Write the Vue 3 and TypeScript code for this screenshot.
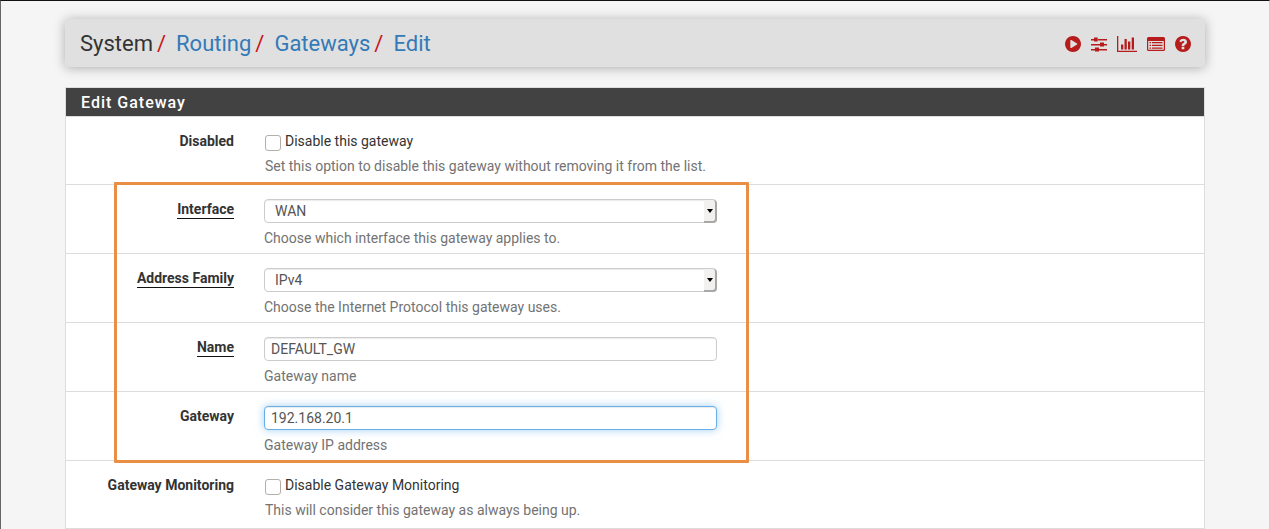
<script setup lang="ts">
import { ref } from 'vue'

const disabled = ref(false)
const iface = ref('WAN')
const family = ref('IPv4')
const gatewayName = ref('DEFAULT_GW')
const gatewayIp = ref('192.168.20.1')
const monitoringOff = ref(false)

const crumbs: string[] = ['Routing', 'Gateways', 'Edit']
</script>

<template>
  <div class="page">
    <div class="container">
      <header class="header">
        <nav class="crumbs" aria-label="Breadcrumb">
          <span>System</span>
          <template v-for="crumb in crumbs" :key="crumb">
            <span class="slash">/</span>
            <a href="#">{{ crumb }}</a>
          </template>
        </nav>
        <div class="actions">
          <a href="#" aria-label="Start service">
            <svg width="16" height="16" viewBox="128 128 1536 1536"><path d="M896 128q209 0 385.500 103t279.500 279.500 103 385.500-103 385.500-279.500 279.500-385.500 103-385.500-103-279.500-279.500-103-385.500 103-385.500 279.500-279.500 385.500-103zm384 823q32-18 32-55t-32-55l-544-320q-31-19-64-1-32 19-32 56v640q0 37 32 56 16 8 32 8 17 0 32-9z" /></svg>
          </a>
          <a href="#" aria-label="Related settings">
            <svg width="16" height="16" viewBox="0 0 16 16"><path d="M0 3h3v1.500H0zM7 3h9v1.500H7zM3 1.500h3.700v4H3zM0 8h9v1.500H0zM13 8h3v1.500h-3zM9 6.500h4v4H9zM0 13h4v1.500H0zM8 13h8v1.500H8zM4 11.500h4v4H4z" /></svg>
          </a>
          <a href="#" aria-label="Related status">
            <svg width="20" height="16" viewBox="0 0 20 16"><path d="M0 0h1.300v14.700H20V16H0zM4 8.500h2.300v5H4zM7.500 3h2.300v10.500H7.500zM11 5.500h2.300v8H11zM14.700 1.500H17v12h-2.300z" /></svg>
          </a>
          <a href="#" aria-label="Related log entries">
            <svg width="18" height="16" viewBox="0 0 18 16"><path fill-rule="evenodd" d="M1.500 1h15Q18 1 18 2.500v11q0 1.500-1.500 1.500h-15Q0 15 0 13.500v-11Q0 1 1.500 1zM1.200 5v8.300q0 .5.500.5h14.600q.5 0 .5-.5V5zM2.500 6H4v1.300H2.500zM5 6h10.500v1.300H5zM2.500 8.700H4V10H2.500zM5 8.700h10.500V10H5zM2.500 11.400H4v1.300H2.500zM5 11.400h10.500v1.300H5z" /></svg>
          </a>
          <a href="#" aria-label="Help">
            <svg width="16" height="16" viewBox="128 128 1536 1536"><path d="M1024 1376v-192q0-14-9-23t-23-9h-192q-14 0-23 9t-9 23v192q0 14 9 23t23 9h192q14 0 23-9t9-23zm256-672q0-88-55.500-163t-138.500-116-170-41q-243 0-371 213-15 24 8 42l132 100q7 6 19 6 16 0 25-12 53-68 86-92 34-24 86-24 48 0 85.500 26t37.500 59q0 38-20 61t-68 45q-63 28-115.500 86.500t-52.500 125.500v36q0 14 9 23t23 9h192q14 0 23-9t9-23q0-19 21.500-49.500t54.500-49.500q32-18 49-28.500t46-35 44.500-48 28-60.500 12.500-81zm384 192q0 209-103 385.500t-279.500 279.500-385.500 103-385.500-103-279.500-279.500-103-385.500 103-385.500 279.500-279.500 385.500-103 385.500 103 279.500 279.500 103 385.500z" /></svg>
          </a>
        </div>
      </header>

      <form class="panel" @submit.prevent>
        <h2 class="panel-title">Edit Gateway</h2>

        <div class="row check-row">
          <span class="label">Disabled</span>
          <div class="field">
            <label class="check"><input v-model="disabled" type="checkbox" />Disable this gateway</label>
            <p class="help indent">Set this option to disable this gateway without removing it from the list.</p>
          </div>
        </div>

        <div class="group">
          <div class="row">
            <label class="label" for="interface"><span class="required">Interface</span></label>
            <div class="field">
              <div class="select">
                <select id="interface" v-model="iface" class="control">
                  <option>WAN</option>
                  <option>LAN</option>
                </select>
                <span class="arrow"></span>
              </div>
              <p class="help">Choose which interface this gateway applies to.</p>
            </div>
          </div>
          <div class="row">
            <label class="label" for="family"><span class="required">Address Family</span></label>
            <div class="field">
              <div class="select">
                <select id="family" v-model="family" class="control">
                  <option>IPv4</option>
                  <option>IPv6</option>
                </select>
                <span class="arrow"></span>
              </div>
              <p class="help">Choose the Internet Protocol this gateway uses.</p>
            </div>
          </div>
          <div class="row">
            <label class="label" for="name"><span class="required">Name</span></label>
            <div class="field">
              <input id="name" v-model="gatewayName" class="control" type="text" />
              <p class="help">Gateway name</p>
            </div>
          </div>
          <div class="row">
            <label class="label" for="gateway">Gateway</label>
            <div class="field">
              <input id="gateway" v-model="gatewayIp" class="control active" type="text" />
              <p class="help">Gateway IP address</p>
            </div>
          </div>
          <div class="highlight"></div>
        </div>

        <div class="row check-row">
          <span class="label">Gateway Monitoring</span>
          <div class="field">
            <label class="check"><input v-model="monitoringOff" type="checkbox" />Disable Gateway Monitoring</label>
            <p class="help indent">This will consider this gateway as always being up.</p>
          </div>
        </div>
      </form>
    </div>
  </div>
</template>

<style>
body {
  background: #f5f5f5;
}
</style>

<style scoped>
* {
  box-sizing: border-box;
}

.page {
  min-height: 100vh;
  padding: 18px 16px 0;
  border: 1px solid #d0d0d0;
  border-top-color: #111;
  border-left-color: #666;
  border-bottom: 0;
  background: #f5f5f5;
  color: #333;
  font: 14px/20px Roboto, sans-serif;
}

.container {
  max-width: 1140px;
  margin: 0 auto;
}

.header {
  display: flex;
  align-items: center;
  justify-content: space-between;
  height: 48px;
  margin-bottom: 20px;
  padding: 2px 14px 0 15px;
  border-radius: 4px;
  background: #e0e0e0;
  box-shadow: 0 1px 12px rgba(0, 0, 0, 0.3);
}

.crumbs {
  display: flex;
  font-size: 22px;
  line-height: 24px;
}

.crumbs a {
  color: #337ab7;
  text-decoration: none;
}

.slash {
  padding: 0 10px 0 4px;
  color: #c7161b;
}

.actions {
  display: flex;
  gap: 10px;
}

.actions a {
  display: flex;
}

.actions svg {
  fill: #b71c1c;
}

.panel {
  border: 1px solid #ddd;
  border-bottom: 0;
  background: #fff;
}

.panel-title {
  margin: 0;
  padding: 5px 15px 3px;
  border-bottom: 1px solid #ddd;
  background: #424242;
  color: #fff;
  font-size: 16px;
  font-weight: 500;
  line-height: 20px;
  letter-spacing: 1px;
}

.row {
  display: grid;
  grid-template-columns: 168px minmax(0, 1fr);
  gap: 30px;
  padding: 14px 15px 5px 0;
  border-bottom: 1px solid #ddd;
}

.check-row {
  padding-bottom: 8px;
}

.label {
  font-weight: 700;
  text-align: right;
}

.required {
  display: inline-block;
  border-bottom: 1px solid #111;
  line-height: 18px;
}

.control {
  display: block;
  width: 100%;
  height: 24px;
  margin: 0;
  padding: 0 6px;
  border: 1px solid #ccc;
  border-radius: 4px;
  outline: 0;
  background: #fff;
  box-shadow: inset 0 1px 1px rgba(0, 0, 0, 0.08);
  color: #555;
  font: inherit;
}

input.control {
  max-width: 453px;
}

.control.active {
  border-color: #66afe9;
  box-shadow: inset 0 1px 1px rgba(0, 0, 0, 0.08), 0 0 8px rgba(102, 175, 233, 0.6);
}

.select {
  position: relative;
  max-width: 453px;
}

select.control {
  padding: 0 20px 0 10px;
  appearance: none;
}

.arrow {
  position: absolute;
  top: 1px;
  right: 0;
  bottom: 0;
  display: grid;
  place-items: center;
  width: 13px;
  border-right: 2px solid #a8a8a8;
  border-bottom: 2px solid #a8a8a8;
  border-radius: 0 4px 4px 0;
  background: #f2f1f0;
  pointer-events: none;
}

.arrow::after {
  border: 3px solid transparent;
  border-top: 4px solid #000;
  border-bottom: 0;
  content: '';
}

.help {
  margin: 5px 0 0;
  color: #737373;
}

.indent {
  padding-left: 1px;
}

.check {
  display: flex;
  gap: 4px;
  width: fit-content;
}

.check input {
  width: 16px;
  height: 16px;
  margin: 4px 0 0 1px;
  border: 1px solid #b5aea8;
  border-radius: 3px;
  background: #fff;
  appearance: none;
}

.check input:checked {
  background: #337ab7;
}

.group {
  position: relative;
}

.highlight {
  position: absolute;
  top: -3px;
  bottom: -2px;
  left: 48px;
  width: calc(100% - 48px);
  max-width: 635px;
  border: 3px solid #e98f45;
  border-radius: 1px;
  pointer-events: none;
}
</style>
